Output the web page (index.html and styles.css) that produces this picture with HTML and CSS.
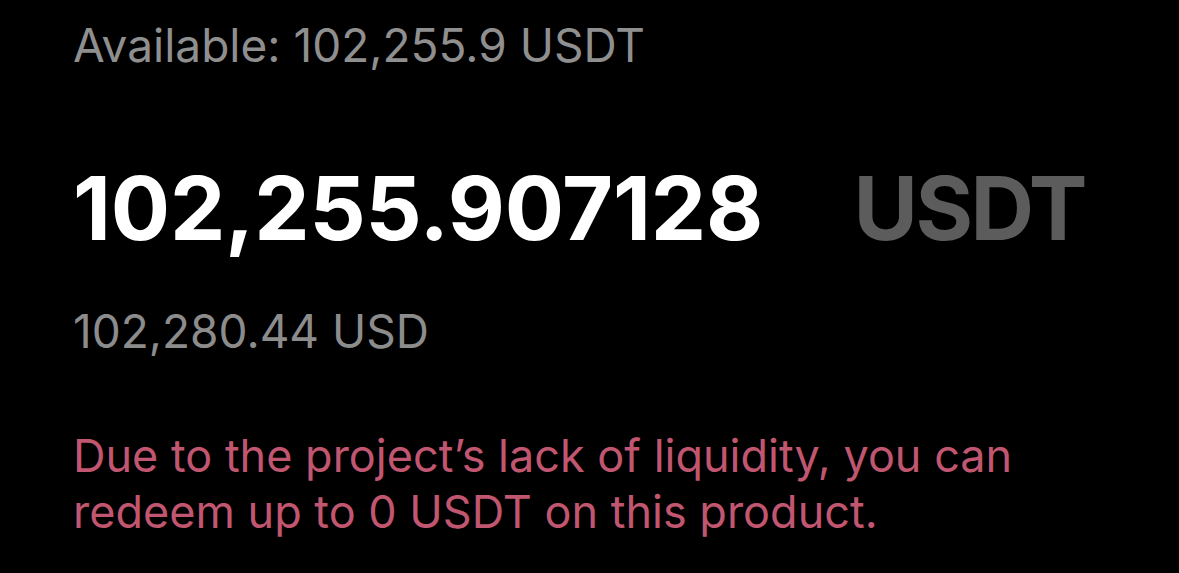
FILE: index.html
```html
<!DOCTYPE html>
<html lang="en">
<head>
  <meta charset="UTF-8">
  <title>Redeem</title>
  <link rel="stylesheet" href="styles.css">
</head>
<body>
  <div class="panel">
    <div class="available">Available: 102,255.9 USDT</div>
    <div class="amount-row">
      <span class="amount">102,255.907128</span>
      <span class="unit">USDT</span>
    </div>
    <div class="fiat">102,280.44 USD</div>
    <p class="warning">Due to the project’s lack of liquidity, you can redeem up to 0 USDT on this product.</p>
  </div>
</body>
</html>
```

FILE: styles.css
```css
html, body { margin: 0; background: #000; }
body { font-family: Inter, "Liberation Sans", sans-serif; }
.panel { padding: 17px 73px 0 73px; }
.available { color: #8f8f8f; font-size: 46px; line-height: 56px; }
.amount-row { display: flex; align-items: baseline; justify-content: space-between; width: 1012px; margin-top: 85px; }
.amount { color: #fff; font-size: 88px; font-weight: 700; line-height: 100px; letter-spacing: -0.2px; }
.unit { color: #5c5c5c; font-size: 88px; font-weight: 700; line-height: 100px; letter-spacing: -2.5px; }
.fiat { color: #8c8c8c; font-size: 46px; line-height: 56px; margin-top: 45px; }
.warning { color: #c0566f; font-size: 45px; line-height: 56px; margin: 69px 0 0; width: 960px; }
```
